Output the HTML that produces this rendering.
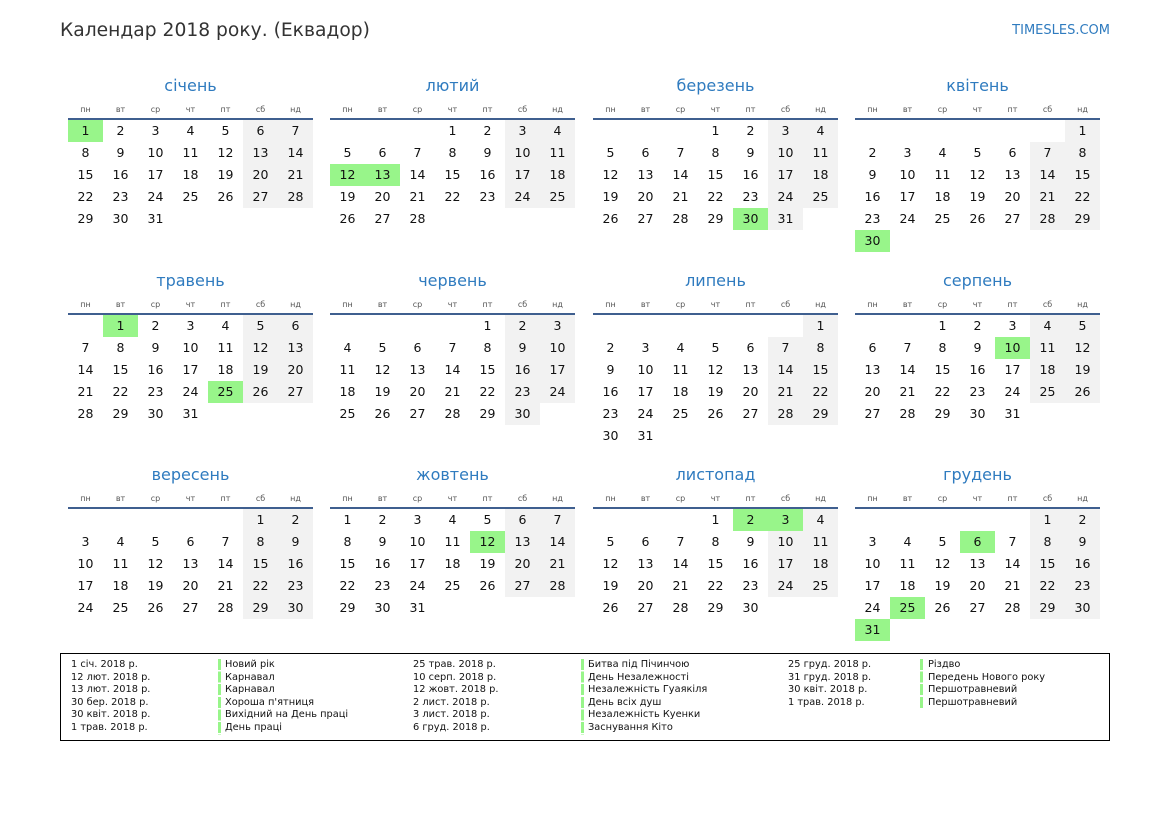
<!DOCTYPE html>
<html><head><meta charset="utf-8">
<style>
body{margin:0;width:1169px;height:827px;background:#fff;font-family:"DejaVu Sans","Liberation Sans",sans-serif;position:relative;overflow:hidden}
.t{position:absolute;left:60px;top:20px;font-size:18.7px;color:#333}
.s{position:absolute;right:59px;top:23px;font-size:13px;color:#2f7bbf}
.m{position:absolute;width:245px}
.mn{position:absolute;top:0;width:245px;text-align:center;font-size:16px;color:#2f7bbf;line-height:20px}
.wd{position:absolute;top:29px;width:35px;text-align:center;font-size:8px;color:#555;line-height:10px}
.ln{position:absolute;top:42px;left:0;width:245px;height:2px;background:#3f5f8f}
.c{position:absolute;width:35px;height:22px;line-height:22px;text-align:center;font-size:12.5px;color:#111}
.g{background:#f2f2f2}.h{background:#98f58a}
.lg{position:absolute;left:60px;top:653px;width:1048px;height:86px;border:1px solid #000}
.lc{position:absolute;top:5px;font-size:9.8px;line-height:12.6px;color:#111;white-space:nowrap}
.bar{position:absolute;top:5px;width:3px;height:76px;background:repeating-linear-gradient(#98f58a 0 11px,#fff 11px 12.6px)}
</style></head><body>
<div class="t">Календар 2018 року. (Еквадор)</div>
<div class="s">TIMESLES.COM</div>
<div id="cal"></div>
<div class="lg">
<div class="lc" style="left:10px">1 січ. 2018 р.<br>12 лют. 2018 р.<br>13 лют. 2018 р.<br>30 бер. 2018 р.<br>30 квіт. 2018 р.<br>1 трав. 2018 р.</div>
<div class="bar" style="left:157px"></div>
<div class="lc" style="left:164px">Новий рік<br>Карнавал<br>Карнавал<br>Хороша п'ятниця<br>Вихідний на День праці<br>День праці</div>
<div class="lc" style="left:352px">25 трав. 2018 р.<br>10 серп. 2018 р.<br>12 жовт. 2018 р.<br>2 лист. 2018 р.<br>3 лист. 2018 р.<br>6 груд. 2018 р.</div>
<div class="bar" style="left:520px"></div>
<div class="lc" style="left:527px">Битва під Пічинчою<br>День Незалежності<br>Незалежність Гуаякіля<br>День всіх душ<br>Незалежність Куенки<br>Заснування Кіто</div>
<div class="lc" style="left:727px">25 груд. 2018 р.<br>31 груд. 2018 р.<br>30 квіт. 2018 р.<br>1 трав. 2018 р.</div>
<div class="bar" style="left:859px;height:50px"></div>
<div class="lc" style="left:867px">Різдво<br>Передень Нового року<br>Першотравневий<br>Першотравневий</div>
</div>
<script>
var names=["січень","лютий","березень","квітень","травень","червень","липень","серпень","вересень","жовтень","листопад","грудень"];
var wd=["пн","вт","ср","чт","пт","сб","нд"];
var hol={"0-1":1,"1-12":1,"1-13":1,"2-30":1,"3-30":1,"4-1":1,"4-25":1,"7-10":1,"9-12":1,"10-2":1,"10-3":1,"11-6":1,"11-25":1,"11-31":1};
var xs=[68,330,593,855],ys=[76,271,465];
var h="";
for(var m=0;m<12;m++){
 var x=xs[m%4],y=ys[Math.floor(m/4)];
 h+='<div class="m" style="left:'+x+'px;top:'+y+'px"><div class="mn">'+names[m]+'</div>';
 for(var i=0;i<7;i++)h+='<div class="wd" style="left:'+(i*35)+'px">'+wd[i]+'</div>';
 h+='<div class="ln"></div>';
 var first=(new Date(2018,m,1).getDay()+6)%7;
 var n=new Date(2018,m+1,0).getDate();
 for(var d=1;d<=n;d++){
  var p=first+d-1,col=p%7,row=Math.floor(p/7);
  var cl="c"+(hol[m+"-"+d]?" h":(col>=5?" g":""));
  h+='<div class="'+cl+'" style="left:'+(col*35)+'px;top:'+(44+row*22)+'px">'+d+'</div>';
 }
 h+='</div>';
}
document.getElementById("cal").innerHTML=h;
</script>
</body></html>
